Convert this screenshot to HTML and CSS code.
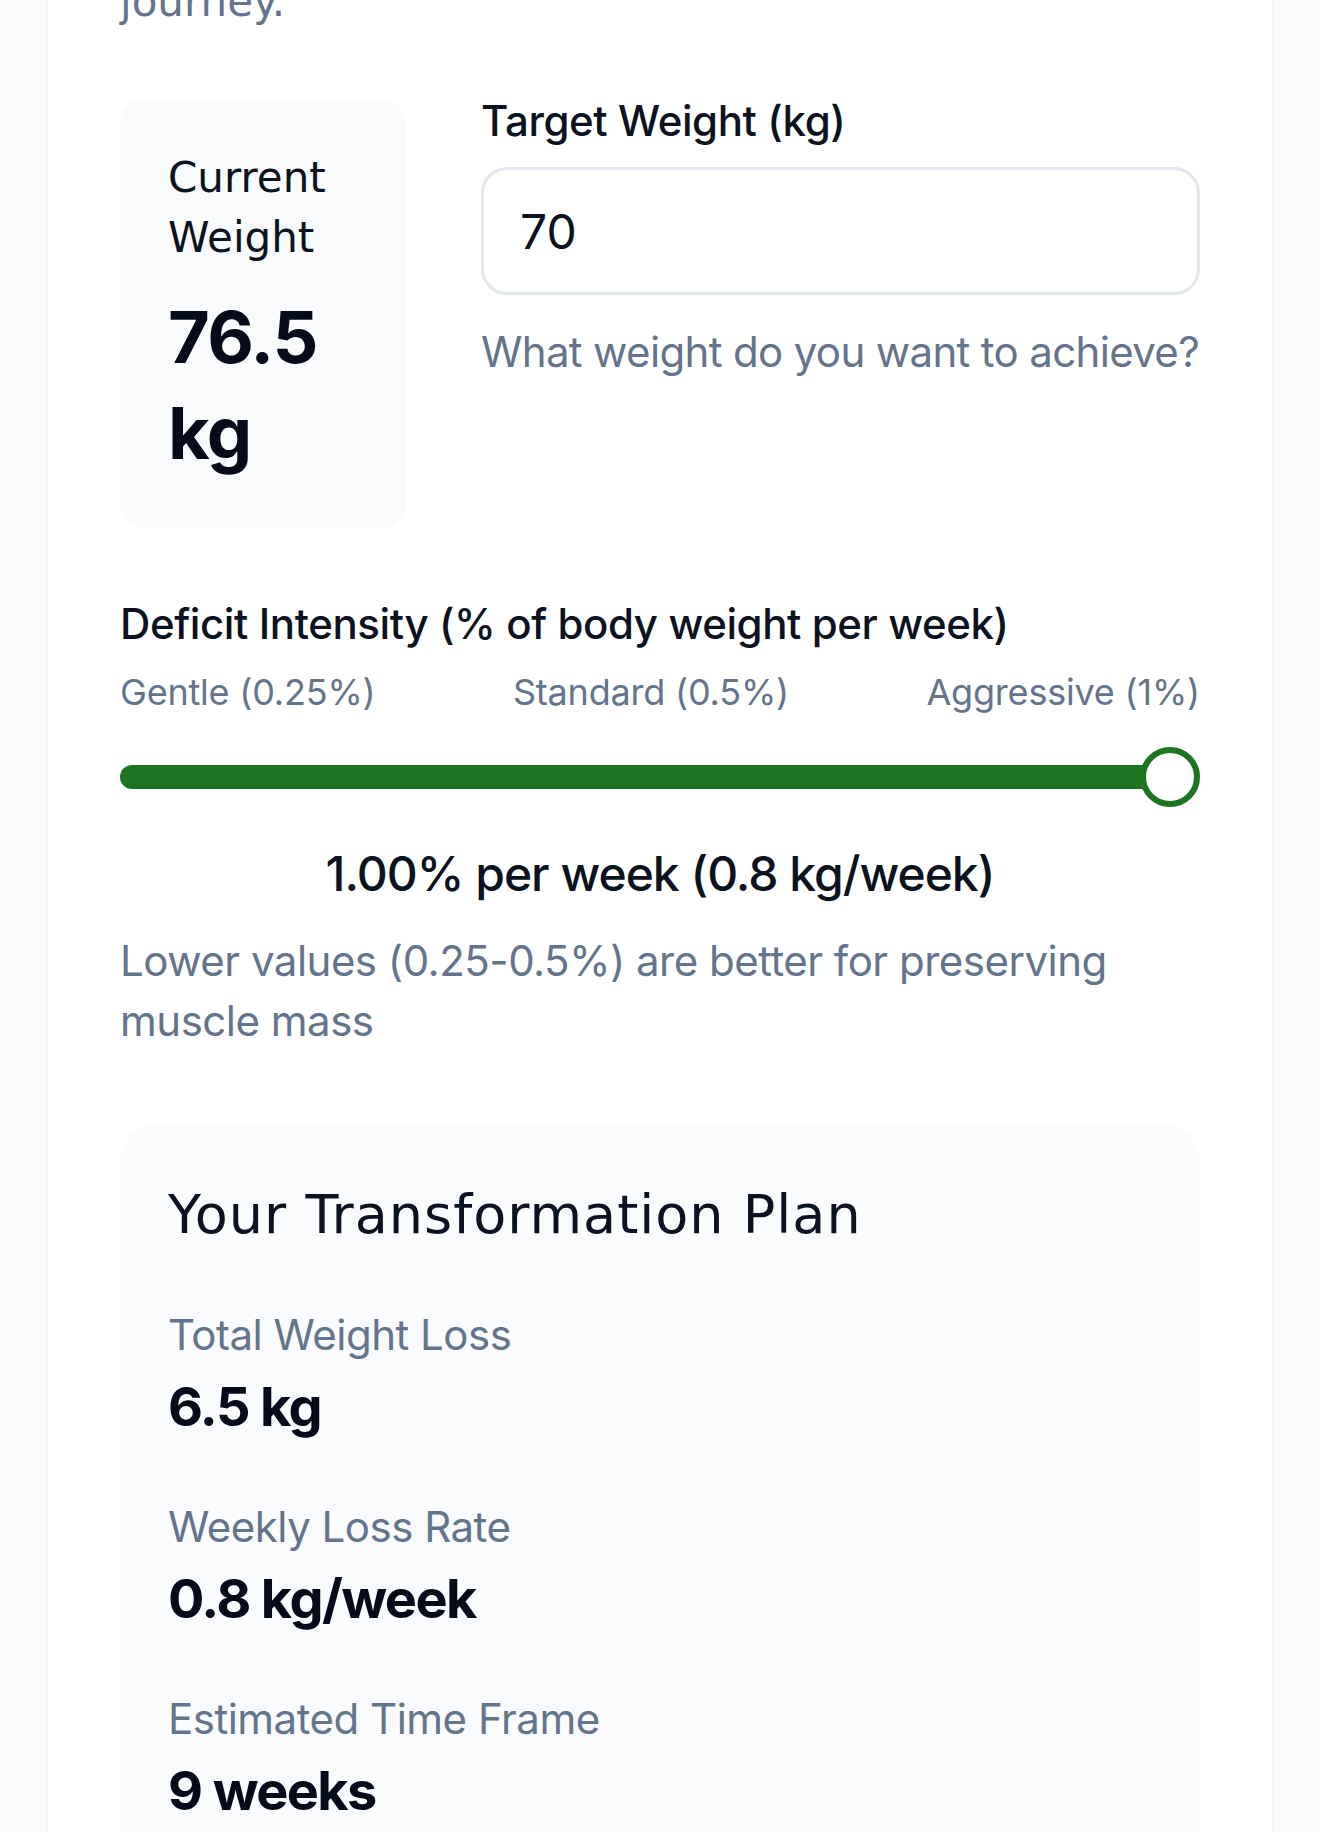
FILE: index.html
```html
<!DOCTYPE html>
<html lang="en">
<head>
<meta charset="utf-8">
<title>Your Transformation Plan</title>
<link rel="stylesheet" href="styles.css">
</head>
<body>
<main class="card">
  <p class="intro">journey.</p>

  <section class="weights">
    <div class="current">
      <div class="current-label">Current Weight</div>
      <div class="current-value">76.5 kg</div>
    </div>
    <div class="target">
      <label class="field-label" for="target">Target Weight (kg)</label>
      <input class="field-input" id="target" type="text" value="70">
      <p class="field-help">What weight do you want to achieve?</p>
    </div>
  </section>

  <section class="deficit">
    <div class="field-label">Deficit Intensity (% of body weight per week)</div>
    <div class="scale">
      <span>Gentle (0.25%)</span>
      <span>Standard (0.5%)</span>
      <span>Aggressive (1%)</span>
    </div>
    <div class="slider">
      <div class="track"></div>
      <div class="thumb"></div>
    </div>
    <div class="rate">1.00% per week (0.8 kg/week)</div>
    <p class="note">Lower values (0.25-0.5%) are better for preserving muscle mass</p>
  </section>

  <section class="plan">
    <h2 class="plan-title">Your Transformation Plan</h2>
    <div class="stat">
      <div class="stat-label">Total Weight Loss</div>
      <div class="stat-value">6.5 kg</div>
    </div>
    <div class="stat">
      <div class="stat-label">Weekly Loss Rate</div>
      <div class="stat-value">0.8 kg/week</div>
    </div>
    <div class="stat">
      <div class="stat-label">Estimated Time Frame</div>
      <div class="stat-value">9 weeks</div>
    </div>
  </section>
</main>
</body>
</html>
```

FILE: styles.css
```css
* { box-sizing: border-box; }

html, body {
  margin: 0;
  padding: 0;
}

body {
  background: #fafafa;
  font-family: Inter, "Liberation Sans", sans-serif;
  color: #0b1220;
  overflow: hidden;
}

.card {
  width: 1226px;
  margin: 0 47px;
  background: #ffffff;
  border-left: 1px solid #f0f1f3;
  border-right: 1px solid #f0f1f3;
  box-shadow: 0 1px 4px rgba(15, 23, 42, 0.03);
  padding: 0 72px 200px;
}

.intro {
  margin: -28px 0 0;
  font-family: "DejaVu Sans", sans-serif;
  font-size: 42px;
  line-height: 60px;
  color: #64748b;
}

.weights {
  display: flex;
  align-items: flex-start;
  gap: 75px;
  margin-top: 59px;
}

.current {
  flex: 0 0 286px;
  margin-top: 8px;
  background: #f8fafc;
  border-radius: 24px;
  padding: 49px 48px 47px;
}

.current-label {
  font-family: "DejaVu Sans", sans-serif;
  font-size: 42px;
  line-height: 60px;
  color: #0b1220;
}

.current-value {
  margin-top: 21px;
  font-size: 72px;
  line-height: 96px;
  font-weight: 700;
  letter-spacing: -1.5px;
  color: #050b18;
}

.target {
  flex: 1 1 auto;
  min-width: 0;
}

.field-label {
  display: block;
  font-size: 42px;
  line-height: 60px;
  font-weight: 500;
  letter-spacing: -0.4px;
  color: #0b1220;
}

.field-input {
  display: block;
  width: 100%;
  height: 128px;
  margin-top: 16px;
  padding: 0 36px;
  border: 3px solid #e2e8f0;
  border-radius: 26px;
  background: #ffffff;
  font-family: Inter, "Liberation Sans", sans-serif;
  font-size: 48px;
  color: #0b1220;
  outline: none;
}

.field-help {
  margin: 27px 0 0;
  font-size: 42px;
  line-height: 60px;
  color: #64748b;
  white-space: nowrap;
  letter-spacing: -0.65px;
}

.deficit {
  margin-top: 66px;
}

.scale {
  display: flex;
  justify-content: space-between;
  margin-top: 14px;
  font-size: 36px;
  line-height: 48px;
  letter-spacing: -0.2px;
  color: #64748b;
}

.slider {
  position: relative;
  height: 60px;
  margin-top: 31px;
}

.track {
  position: absolute;
  left: 0;
  right: 30px;
  top: 18px;
  height: 24px;
  border-radius: 12px;
  background: #1e7521;
}

.thumb {
  position: absolute;
  right: 0;
  top: 0;
  width: 60px;
  height: 60px;
  border-radius: 50%;
  border: 6px solid #1e7521;
  background: #ffffff;
}

.rate {
  margin-top: 31px;
  text-align: center;
  font-size: 48px;
  line-height: 72px;
  font-weight: 500;
  letter-spacing: -1px;
  color: #0b1220;
}

.note {
  margin: 21px 0 0;
  font-size: 42px;
  line-height: 60px;
  letter-spacing: -0.5px;
  color: #64748b;
}

.plan {
  margin-top: 74px;
  background: #f9fbfd;
  border-radius: 36px;
  padding: 48px 48px 200px;
}

.plan-title {
  margin: 0 0 48px;
  font-family: "DejaVu Sans", sans-serif;
  font-size: 54px;
  line-height: 84px;
  font-weight: 400;
  letter-spacing: 1px;
  color: #0b1220;
}

.stat + .stat {
  margin-top: 48px;
}

.stat-label {
  font-size: 42px;
  line-height: 60px;
  letter-spacing: -0.5px;
  color: #64748b;
}

.stat-value {
  font-size: 54px;
  line-height: 84px;
  font-weight: 700;
  letter-spacing: -1.6px;
  color: #050b18;
}
```
